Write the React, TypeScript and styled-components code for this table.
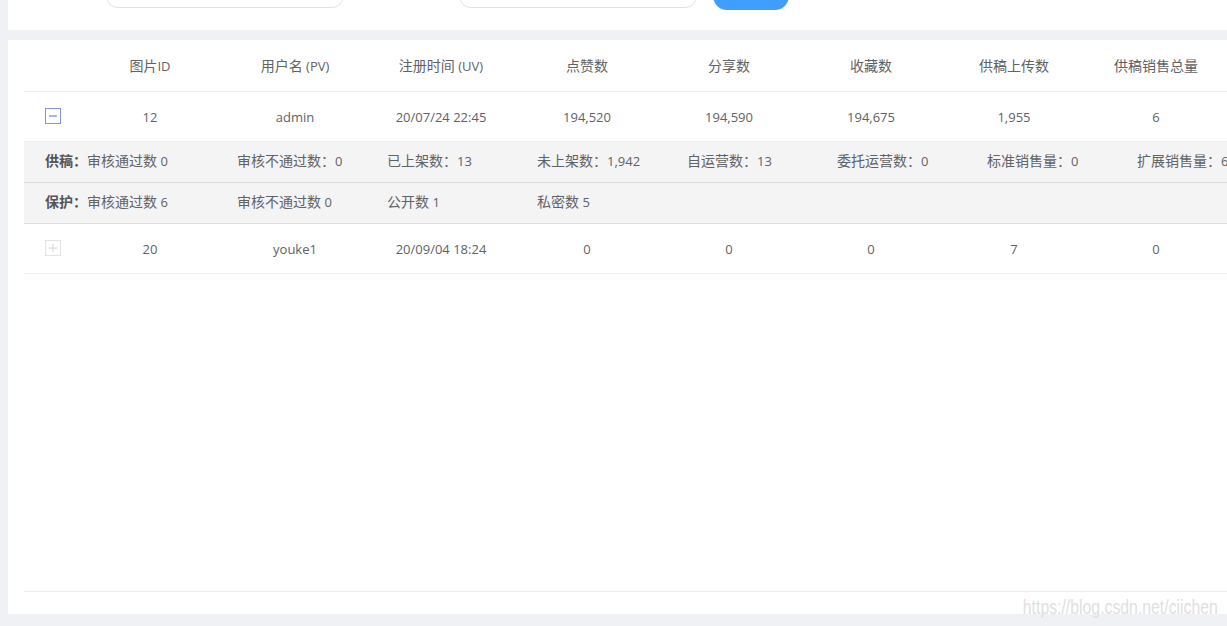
import React from "react";
import styled, { createGlobalStyle } from "styled-components";

const Global = createGlobalStyle`
  html, body { margin: 0; padding: 0; background: #f0f1f5; }
  body {
    font-family: "Open Sans", "Noto Sans CJK SC", sans-serif;
    font-size: 13px;
    color: #606266;
    overflow: hidden;
  }
`;

const Page = styled.div`
  position: relative;
  width: 1227px;
  height: 626px;
  padding-left: 8px;
  box-sizing: border-box;
  display: flex;
  flex-direction: column;
  gap: 10px;
  overflow: hidden;
`;

const TopBar = styled.div`
  height: 30px;
  background: #fff;
  display: flex;
  align-items: flex-end;
  padding: 0 0 22px 98px;
  box-sizing: border-box;
  overflow: hidden;
  flex-shrink: 0;
`;

const SearchInput = styled.div<{ $gap?: number }>`
  width: 238px;
  height: 40px;
  flex-shrink: 0;
  border: 1px solid #dfe1e6;
  border-radius: 12px;
  box-sizing: border-box;
  background: #fff;
  margin-right: ${(p) => p.$gap ?? 0}px;
`;

const SearchButton = styled.div`
  width: 76px;
  height: 40px;
  flex-shrink: 0;
  background: #409eff;
  border-radius: 14px;
  margin-bottom: -2px;
`;

const Panel = styled.div`
  height: 574px;
  background: #fff;
  padding-left: 16px;
  display: flex;
  flex-direction: column;
  overflow: hidden;
  flex-shrink: 0;
`;

const Table = styled.div`
  width: 1300px;
  display: flex;
  flex-direction: column;
`;

const cols = "54px 144px 146px 146px 146px 138px 146px 140px 144px 140px";

const Row = styled.div<{ $h: number }>`
  display: grid;
  grid-template-columns: ${cols};
  height: ${(p) => p.$h}px;
  align-items: center;
  border-bottom: 1px solid #ebeef5;
`;

const Cell = styled.div`
  text-align: center;
  white-space: nowrap;
  line-height: 20px;
`;

const IconCell = styled.div`
  padding-left: 21px;
  display: flex;
  align-items: center;
`;

const ExpandBox = styled.div<{ $open?: boolean }>`
  width: 16px;
  height: 16px;
  box-sizing: border-box;
  border: 1px solid ${(p) => (p.$open ? "#8891d6" : "#e3e3e3")};
  display: flex;
  align-items: center;
  justify-content: center;
  margin-top: -2px;
  svg { display: block; }
`;

const DetailRow = styled.div`
  height: 41px;
  display: flex;
  align-items: center;
  background: #f4f4f5;
  border-bottom: 1px solid #dcdde0;
  padding: 0 0 2px 21px;
  box-sizing: border-box;
  white-space: nowrap;
  line-height: 20px;
`;

const DetailLabel = styled.span`
  width: 42px;
  font-weight: 700;
  color: #555;
  flex-shrink: 0;
`;

const DetailItem = styled.span`
  width: 150px;
  flex-shrink: 0;
`;

const Cjk = styled.span`
  font-size: 14px;
`;

const Spacer = styled.div`
  flex: 1;
`;

const BottomLine = styled.div`
  height: 1px;
  background: #ebedf2;
  margin-bottom: 22px;
`;

const Watermark = styled.div`
  position: absolute;
  right: 9px;
  bottom: 8px;
  font-family: "Liberation Sans", Arial, sans-serif;
  font-size: 20px;
  line-height: 22px;
  color: #e0e0e0;
  transform: scaleX(0.79);
  transform-origin: right center;
  white-space: nowrap;
`;

const cjkRe = /([\u3000-\u9fff\uff00-\uffef]+)/;

const Mixed = ({ text }: { text: string }) => (
  <>
    {text.split(cjkRe).map((part, i) =>
      part === "" ? null : cjkRe.test(part) ? <Cjk key={i}>{part}</Cjk> : <React.Fragment key={i}>{part}</React.Fragment>
    )}
  </>
);

const headers = ["图片ID", "用户名 (PV)", "注册时间 (UV)", "点赞数", "分享数", "收藏数", "供稿上传数", "供稿销售总量"];

const rows = [
  { open: true, vals: ["12", "admin", "20/07/24 22:45", "194,520", "194,590", "194,675", "1,955", "6"] },
  { open: false, vals: ["20", "youke1", "20/09/04 18:24", "0", "0", "0", "7", "0"] },
];

const supply = ["审核通过数 0", "审核不通过数：0", "已上架数：13", "未上架数：1,942", "自运营数：13", "委托运营数：0", "标准销售量：0", "扩展销售量：6"];
const protect = ["审核通过数 6", "审核不通过数 0", "公开数 1", "私密数 5"];

const Minus = () => (
  <svg width="10" height="10" viewBox="0 0 10 10">
    <line x1="1" y1="5" x2="9" y2="5" stroke="#3f6fe0" strokeWidth="1" />
  </svg>
);
const Plus = () => (
  <svg width="10" height="10" viewBox="0 0 10 10">
    <line x1="1" y1="5" x2="9" y2="5" stroke="#d4d4d4" strokeWidth="1" />
    <line x1="5" y1="1" x2="5" y2="9" stroke="#d4d4d4" strokeWidth="1" />
  </svg>
);

export default function App() {
  return (
    <>
      <Global />
      <Page>
        <TopBar>
          <SearchInput $gap={115} />
          <SearchInput $gap={16} />
          <SearchButton />
        </TopBar>
        <Panel>
          <Table>
            <Row $h={51}>
              <Cell />
              {headers.map((h) => (
                <Cell key={h}>
                  <Mixed text={h} />
                </Cell>
              ))}
            </Row>
            {rows.map((r) => (
              <React.Fragment key={r.vals[0]}>
                <Row $h={49}>
                  <IconCell>
                    <ExpandBox $open={r.open}>{r.open ? <Minus /> : <Plus />}</ExpandBox>
                  </IconCell>
                  {r.vals.map((v, i) => (
                    <Cell key={i}>{v}</Cell>
                  ))}
                </Row>
                {r.open && (
                  <>
                    <DetailRow>
                      <DetailLabel>
                        <Mixed text="供稿：" />
                      </DetailLabel>
                      {supply.map((s) => (
                        <DetailItem key={s}>
                          <Mixed text={s} />
                        </DetailItem>
                      ))}
                    </DetailRow>
                    <DetailRow>
                      <DetailLabel>
                        <Mixed text="保护：" />
                      </DetailLabel>
                      {protect.map((s) => (
                        <DetailItem key={s}>
                          <Mixed text={s} />
                        </DetailItem>
                      ))}
                    </DetailRow>
                  </>
                )}
              </React.Fragment>
            ))}
          </Table>
          <Spacer />
          <BottomLine />
        </Panel>
        <Watermark>https://blog.csdn.net/ciichen</Watermark>
      </Page>
    </>
  );
}
